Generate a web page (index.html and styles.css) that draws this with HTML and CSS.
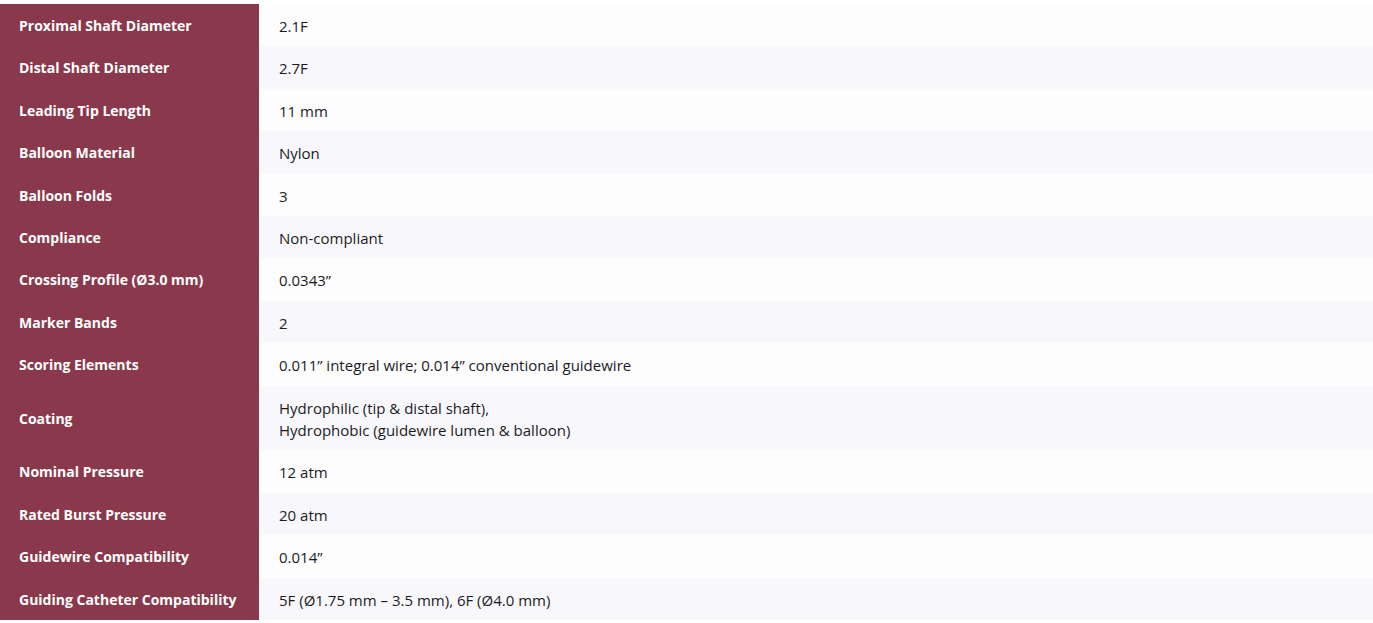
FILE: index.html
```html
<!DOCTYPE html>
<html lang="en">
<head>
<meta charset="utf-8">
<title>Specifications</title>
<link rel="stylesheet" href="styles.css">
</head>
<body>
<div class="page">
<table class="specs">
<tbody>
<tr><th>Proximal Shaft Diameter</th><td>2.1F</td></tr>
<tr><th>Distal Shaft Diameter</th><td>2.7F</td></tr>
<tr><th>Leading Tip Length</th><td>11 mm</td></tr>
<tr><th>Balloon Material</th><td>Nylon</td></tr>
<tr><th>Balloon Folds</th><td>3</td></tr>
<tr><th>Compliance</th><td>Non-compliant</td></tr>
<tr><th>Crossing Profile (Ø3.0 mm)</th><td>0.0343”</td></tr>
<tr><th>Marker Bands</th><td>2</td></tr>
<tr><th>Scoring Elements</th><td>0.011” integral wire; 0.014” conventional guidewire</td></tr>
<tr><th>Coating</th><td>Hydrophilic (tip &amp; distal shaft),<br>Hydrophobic (guidewire lumen &amp; balloon)</td></tr>
<tr><th>Nominal Pressure</th><td>12 atm</td></tr>
<tr><th>Rated Burst Pressure</th><td>20 atm</td></tr>
<tr><th>Guidewire Compatibility</th><td>0.014”</td></tr>
<tr><th>Guiding Catheter Compatibility</th><td>5F (Ø1.75 mm – 3.5 mm), 6F (Ø4.0 mm)</td></tr>
</tbody>
</table>
</div>
</body>
</html>
```
FILE: styles.css
```css
html, body {
  margin: 0;
  padding: 0;
  background: #ffffff;
}
.page {
  padding-top: 4px;
  font-family: "Open Sans", "Liberation Sans", sans-serif;
  font-size: 14px;
}
.specs {
  width: 100%;
  border-collapse: collapse;
  border-spacing: 0;
}
.specs th,
.specs td {
  padding: 11px 19px 9px;
  line-height: 22.4px;
  vertical-align: middle;
  text-align: left;
}
.specs th {
  width: 221px;
  background: #8a394c;
  color: #ffffff;
  font-size: 14px;
  font-weight: 700;
  white-space: nowrap;
}
.specs td {
  color: #1b1b1f;
  font-size: 15px;
  padding-left: 20px;
}
.specs tr:nth-child(odd) td {
  background: #fdfdfe;
}
.specs tr:nth-child(even) td {
  background: #f8f8fc;
}
```
